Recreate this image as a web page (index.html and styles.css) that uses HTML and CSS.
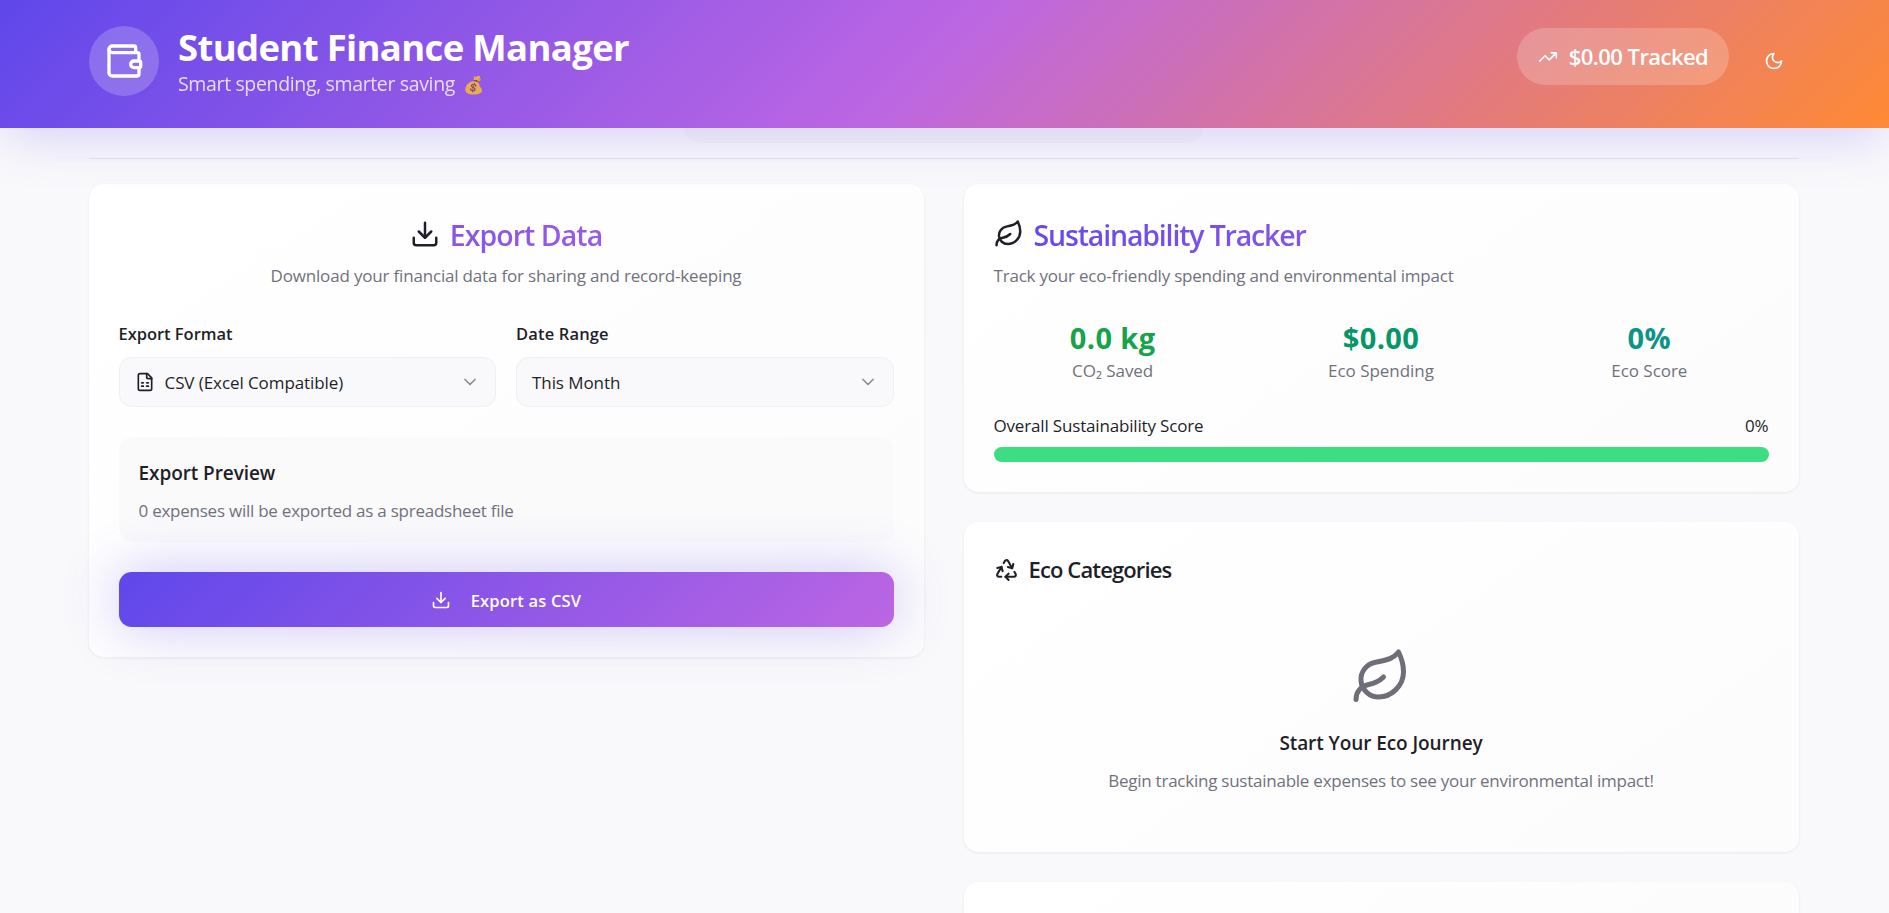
FILE: index.html
```html
<!DOCTYPE html>
<html lang="en">
<head>
<meta charset="utf-8">
<title>Student Finance Manager</title>
<link rel="stylesheet" href="styles.css">
</head>
<body>
<svg class="sprite" aria-hidden="true">
  <symbol id="wallet" viewBox="0 0 24 24"><path d="M19 7V4a1 1 0 0 0-1-1H5a2 2 0 0 0 0 4h15a1 1 0 0 1 1 1v4h-3a2 2 0 0 0 0 4h3a1 1 0 0 0 1-1v-2a1 1 0 0 0-1-1"/><path d="M3 5v14a2 2 0 0 0 2 2h15a1 1 0 0 0 1-1v-4"/></symbol>
  <symbol id="trend" viewBox="0 0 24 24"><path d="M22 7 13.5 15.5 8.500 10.500 2 17"/><path d="M16 7h6v6"/></symbol>
  <symbol id="moon" viewBox="0 0 24 24"><path d="M12 3a6 6 0 0 0 9 9 9 9 0 1 1-9-9Z"/></symbol>
  <symbol id="download" viewBox="0 0 24 24"><path d="M21 15v4a2 2 0 0 1-2 2H5a2 2 0 0 1-2-2v-4"/><path d="m7 10 5 5 5-5"/><path d="M12 15V3"/></symbol>
  <symbol id="sheet" viewBox="0 0 24 24"><path d="M15 2H6a2 2 0 0 0-2 2v16a2 2 0 0 0 2 2h12a2 2 0 0 0 2-2V7Z"/><path d="M14 2v4a2 2 0 0 0 2 2h4"/><path d="M8 13h2"/><path d="M14 13h2"/><path d="M8 17h2"/><path d="M14 17h2"/></symbol>
  <symbol id="chevron" viewBox="0 0 24 24"><path d="m6 9 6 6 6-6"/></symbol>
  <symbol id="leaf" viewBox="0 0 24 24"><path d="M11 20A7 7 0 0 1 9.800 6.100C15.500 5 17 4.480 19 2c1 2 2 4.180 2 8 0 5.500-4.780 10-10 10Z"/><path d="M2 21c0-3 1.850-5.360 5.080-6C9.500 14.520 12 13 13 12"/></symbol>
  <symbol id="recycle" viewBox="0 0 24 24"><path d="M7 19H4.815a1.830 1.830 0 0 1-1.570-.881 1.785 1.785 0 0 1-.004-1.784L7.196 9.500"/><path d="M11 19h8.203a1.830 1.830 0 0 0 1.556-.890 1.784 1.784 0 0 0 0-1.775l-1.226-2.120"/><path d="m14 16-3 3 3 3"/><path d="M8.293 13.596 7.196 9.500 3.100 10.598"/><path d="m9.344 5.811 1.093-1.892A1.830 1.830 0 0 1 11.985 3a1.784 1.784 0 0 1 1.546.888l3.943 6.843"/><path d="m13.378 9.633 4.096 1.098 1.097-4.096"/></symbol>
</svg>
<header class="header">
  <div class="brand">
    <div class="logo"><svg class="icon icon-40"><use href="#wallet"/></svg></div>
    <div class="brand-text">
      <h1 class="app-title">Student Finance Manager</h1>
      <p class="tagline">Smart spending, smarter saving <span class="bag">💰</span></p>
    </div>
  </div>
  <div class="header-actions">
    <div class="tracked"><svg class="icon icon-20"><use href="#trend"/></svg><span>$0.00 Tracked</span></div>
    <button class="theme" aria-label="Theme"><svg class="icon icon-20"><use href="#moon"/></svg></button>
  </div>
</header>
<main class="main">
  <div class="tabs"></div>
  <div class="divider"></div>
  <div class="columns">
    <section class="card export">
      <h2 class="card-title centered"><svg class="icon icon-30"><use href="#download"/></svg><span>Export Data</span></h2>
      <p class="desc centered">Download your financial data for sharing and record-keeping</p>
      <div class="fields">
        <div class="field">
          <label class="label">Export Format</label>
          <div class="select"><svg class="icon icon-20"><use href="#sheet"/></svg><span>CSV (Excel Compatible)</span><svg class="icon icon-20 chevron"><use href="#chevron"/></svg></div>
        </div>
        <div class="field">
          <label class="label label-range">Date Range</label>
          <div class="select"><span>This Month</span><svg class="icon icon-20 chevron"><use href="#chevron"/></svg></div>
        </div>
      </div>
      <div class="preview">
        <h3 class="subhead">Export Preview</h3>
        <p class="note">0 expenses will be exported as a spreadsheet file</p>
      </div>
      <button class="export-btn"><svg class="icon icon-20"><use href="#download"/></svg><span>Export as CSV</span></button>
    </section>
    <div class="stack">
      <section class="card tracker">
        <h2 class="card-title"><svg class="icon icon-30"><use href="#leaf"/></svg><span>Sustainability Tracker</span></h2>
        <p class="desc">Track your eco-friendly spending and environmental impact</p>
        <div class="stats">
          <div class="stat"><div class="value green">0.0 kg</div><div class="stat-label">CO₂ Saved</div></div>
          <div class="stat"><div class="value emerald">$0.00</div><div class="stat-label">Eco Spending</div></div>
          <div class="stat"><div class="value teal">0%</div><div class="stat-label">Eco Score</div></div>
        </div>
        <div class="score"><span>Overall Sustainability Score</span><span>0%</span></div>
        <div class="bar"></div>
      </section>
      <section class="card eco">
        <h2 class="eco-title"><svg class="icon icon-25"><use href="#recycle"/></svg><span>Eco Categories</span></h2>
        <div class="empty">
          <svg class="icon icon-60"><use href="#leaf"/></svg>
          <h3 class="subhead">Start Your Eco Journey</h3>
          <p class="note">Begin tracking sustainable expenses to see your environmental impact!</p>
        </div>
      </section>
      <section class="card next"></section>
    </div>
  </div>
</main>
</body>
</html>
```
FILE: styles.css
```css
* { box-sizing: border-box; margin: 0; padding: 0; }
body {
  height: 913px;
  overflow: hidden;
  background: #f9f9fb;
  color: #1f1f29;
  font-family: "Open Sans", "Noto Sans", sans-serif;
  font-size: 17px;
  line-height: 25px;
  white-space: nowrap;
}
.sprite { position: absolute; width: 0; height: 0; }
.icon { display: block; flex: none; fill: none; stroke: currentColor; stroke-width: 2; stroke-linecap: round; stroke-linejoin: round; }
.icon-20 { width: 20px; height: 20px; }
.icon-25 { width: 25px; height: 25px; }
.icon-30 { width: 30px; height: 30px; }
.icon-40 { width: 40px; height: 40px; }
.icon-60 { width: 60px; height: 60px; }
button { border: 0; background: none; color: inherit; font: inherit; }

.header {
  position: relative;
  z-index: 2;
  height: 128px;
  padding: 26px 90px 32px 89px;
  display: flex;
  justify-content: space-between;
  color: #fff;
  background: linear-gradient(135deg, #5f47eb 0%, #bc66e3 49%, #ff8a33 100%);
  box-shadow: 0 15px 50px -5px rgba(95, 71, 235, .22);
}
.brand { display: flex; gap: 19px; }
.logo { width: 70px; height: 70px; border-radius: 50%; background: rgba(255, 255, 255, .2); display: grid; place-items: center; }
.app-title { font-size: 36.5px; font-weight: 700; line-height: 45px; margin-top: -1px; letter-spacing: -.66px; }
.tagline { font-size: 19.5px; line-height: 30px; opacity: .8; margin-top: -1px; letter-spacing: -.355px; }
.bag { font-size: 17px; margin-left: 3px; letter-spacing: 0; filter: hue-rotate(-12deg); }
.header-actions { display: flex; gap: 20px; }
.tracked { width: 212px; height: 57px; margin-top: 2px; border-radius: 29px; background: rgba(255, 255, 255, .2); display: flex; align-items: center; justify-content: center; gap: 11px; font-size: 22px; font-weight: 600; letter-spacing: -.55px; }
.theme { width: 50px; height: 70px; display: grid; place-items: center; }

.main { padding: 0 90.5px 0 88.5px; }
.tabs { width: 519px; height: 15px; margin-left: 595px; border-radius: 0 0 15px 15px; background: #f4f4f6; }
.divider { height: 1px; margin-top: 15px; background: #e3e3ea; }
.columns { display: grid; grid-template-columns: 1fr 1fr; gap: 40px; align-items: start; margin-top: 25px; }
.stack { display: grid; gap: 30px; }
.card { padding: 30px; border-radius: 15px; background: linear-gradient(145deg, #fff, #fcfcfc); box-shadow: 0 1px 3px rgba(31, 31, 41, .07); }
.card-title { display: flex; align-items: center; gap: 10px; height: 40px; font-size: 28.5px; font-weight: 600; line-height: 40px; background: linear-gradient(135deg, #5f47eb, #bc66e3); -webkit-background-clip: text; background-clip: text; -webkit-text-fill-color: transparent; }
.card-title span { padding-top: 2px; letter-spacing: -1.16px; }
.card-title.centered span { letter-spacing: -.95px; }
.centered { justify-content: center; text-align: center; }
.desc { margin-top: 9px; height: 25px; color: #71717d; letter-spacing: -.21px; }
.desc.centered { letter-spacing: -.18px; }

.fields { display: grid; grid-template-columns: 1fr 1fr; gap: 20px; margin-top: 33px; }
.label { display: block; font-size: 16.5px; font-weight: 600; margin-bottom: 11px; letter-spacing: -.03px; }
.label-range { letter-spacing: .15px; }
.select { height: 50px; padding: 0 15px; border: 1px solid #f0f0f4; border-radius: 12.5px; background: #f9f9fb; display: flex; align-items: center; gap: 10px; letter-spacing: -.08px; }
.chevron { margin-left: auto; opacity: .5; }
.preview { margin-top: 30px; height: 105px; padding: 21px 20px 19px; border-radius: 15px; background: #fafafb; }
.subhead { font-size: 19px; font-weight: 600; line-height: 30px; letter-spacing: -.08px; }
.note { margin-top: 10px; color: #71717d; letter-spacing: -.243px; }
.export-btn { margin-top: 30px; width: 100%; height: 55px; border-radius: 12.5px; display: flex; align-items: center; justify-content: center; gap: 20px; color: #fff; font-size: 16.5px; font-weight: 600; letter-spacing: .18px; background: linear-gradient(135deg, #5f47eb, #bc66e3); box-shadow: 0 0 55px rgba(95, 71, 235, .31); }
.export-btn span { padding-top: 1px; }

.stats { display: grid; grid-template-columns: repeat(3, 1fr); gap: 30px; margin-top: 30px; text-align: center; }
.value { font-size: 29px; font-weight: 700; line-height: 40px; letter-spacing: .4px; }
.green { color: #16a34a; }
.emerald { color: #059669; }
.teal { color: #0d9488; }
.stat-label { color: #71717d; letter-spacing: -.04px; }
.score { display: flex; justify-content: space-between; margin-top: 30px; height: 34px; letter-spacing: -.17px; }
.bar { height: 15px; border-radius: 8px; background: #3dde81; }

.eco { height: 330px; }
.eco-title { display: flex; align-items: center; gap: 10px; height: 35px; font-size: 22px; font-weight: 600; letter-spacing: -.87px; }
.empty { display: flex; flex-direction: column; align-items: center; margin-top: 60px; }
.empty .icon { color: #6e6e79; }
.empty .subhead { margin-top: 21px; }
.next { height: 61px; margin-bottom: -30px; border-radius: 15px 15px 0 0; }
```
